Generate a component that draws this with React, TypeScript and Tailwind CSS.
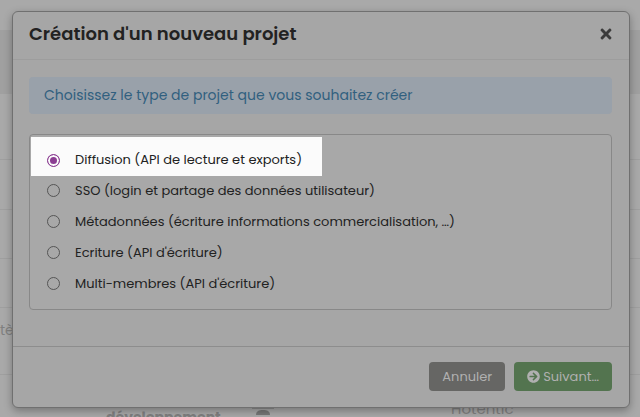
import { useState } from "react";
import { FaArrowCircleRight, FaTimes } from "react-icons/fa";

const options = [
  { id: "diffusion", label: "Diffusion (API de lecture et exports)" },
  { id: "sso", label: "SSO (login et partage des données utilisateur)" },
  { id: "metadonnees", label: "Métadonnées (écriture informations commercialisation, …)" },
  { id: "ecriture", label: "Ecriture (API d'écriture)" },
  { id: "multi", label: "Multi-membres (API d'écriture)" },
];

function PageBehind() {
  return (
    <div aria-hidden="true" className="h-screen overflow-hidden text-sm leading-5 text-[#808080]">
      <div className="h-[30px]" />
      <div className="h-16 bg-[#a0a0a0]" />
      <div className="h-[66px] border-b border-[#9f9f9f]" />
      <div className="h-[50px] border-b border-[#9f9f9f]" />
      <div className="h-[49px] border-b border-[#9f9f9f]" />
      <div className="h-[49px] border-b border-[#9f9f9f]" />
      <div className="flex h-[67px] border-b border-[#9f9f9f] pt-3">tè</div>
      <div className="flex pt-8">
        <span className="ml-[106px] w-[146px] font-bold">développement</span>
        <svg viewBox="0 0 22 10" className="h-[10px] w-[22px]" fill="#777777">
          <rect y="1" width="22" height="1" fill="#8c8c8c" />
          <path d="M4 8C4 4 7 3 11 3s7 1 7 5z" />
        </svg>
        <span className="-mt-2 ml-[177px] text-[15px]">Hotentic</span>
      </div>
    </div>
  );
}

export default function App() {
  const [selected, setSelected] = useState("diffusion");
  return (
    <div className="relative bg-[#a9a9a9] font-[Poppins,Inter,sans-serif]">
      <PageBehind />
      <div
        role="dialog"
        aria-labelledby="dialog-title"
        className="absolute top-[11px] right-[10px] left-3 rounded-md border border-[#707070] bg-[#a6a6a6] text-[#222222] shadow-[0_3px_9px_rgba(0,0,0,0.3)]"
      >
        <header className="flex h-12 items-center justify-between border-b border-[#9d9d9d] pr-[17px] pb-1 pl-4">
          <h1 id="dialog-title" className="text-lg font-semibold">Création d'un nouveau projet</h1>
          <button type="button" aria-label="Fermer" className="text-[#3b3b3b]">
            <FaTimes className="h-4 w-3" />
          </button>
        </header>
        <div className="pt-[17px] pr-[17px] pb-9 pl-4">
          <p className="rounded-sm bg-[#99a1aa] px-[15px] pt-2 pb-[9px] text-sm leading-5 text-[#31607f]">
            Choisissez le type de projet que vous souhaitez créer
          </p>
          <fieldset
            aria-label="Type de projet"
            className="mt-5 flex flex-col items-start rounded-sm border border-[#888888] bg-[#a8a8a8] px-px pt-0.5 pb-[10px] text-[13px]"
          >
            {options.map((option, index) => (
              <label
                key={option.id}
                className={
                  index === 0
                    ? "-mb-px flex h-[39px] items-center gap-[15px] bg-[#fbfbfb] pt-[7px] pr-5 pl-4"
                    : "flex h-[31px] items-center gap-[15px] pl-4"
                }
              >
                <input
                  type="radio"
                  name="type"
                  checked={selected === option.id}
                  onChange={() => setSelected(option.id)}
                  className="size-[13px] appearance-none rounded-full border border-[#555555] checked:border-[#8b3d92] checked:bg-[#8b3d92] checked:shadow-[inset_0_0_0_2px_#fbfbfb]"
                />
                {option.label}
              </label>
            ))}
          </fieldset>
        </div>
        <footer className="flex justify-end gap-[9px] border-t border-[#8d8d8d] pt-[15px] pr-[17px] pb-4 pl-4 text-[13px] text-[#b0b0b0]">
          <button type="button" className="h-[29px] rounded bg-[#666664] px-[13px]">Annuler</button>
          <button type="button" className="flex h-[29px] items-center gap-[3px] rounded bg-[#53744f] px-[13px]">
            <FaArrowCircleRight className="size-[13px]" />
            Suivant…
          </button>
        </footer>
      </div>
    </div>
  );
}
